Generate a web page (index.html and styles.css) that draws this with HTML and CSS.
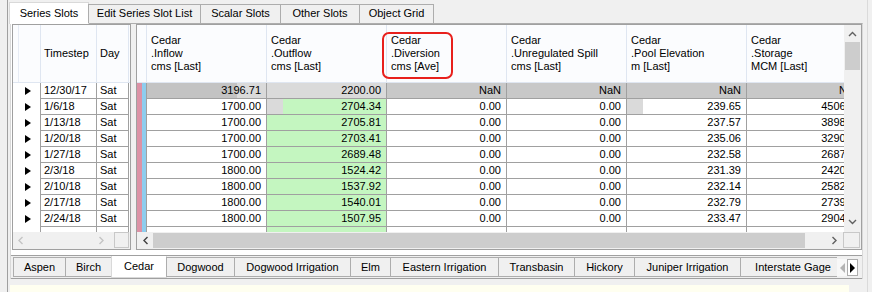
FILE: index.html
```html
<!DOCTYPE html>
<html lang="en">
<head>
    <meta charset="UTF-8">
    <title>Series Slots - Cedar</title>
    <link rel="stylesheet" href="styles.css">
</head>
<body>

<div class="app">
    <div class="toptabs">
        <div class="tab active" style="width:80px">Series Slots</div>
        <div class="tab" style="width:113px">Edit Series Slot List</div>
        <div class="tab" style="width:81px">Scalar Slots</div>
        <div class="tab" style="width:80px">Other Slots</div>
        <div class="tab" style="width:75px">Object Grid</div>
    </div>

    <div class="pane">
        <div class="grids">
            <!-- left: timestep grid -->
            <div class="lgrid">
                <div class="lview">
                    <div class="lhead">
                        <div class="lc rh"><span class="rhline"></span></div>
                        <div class="lc ts">Timestep</div>
                        <div class="lc day">Day</div>
                    </div>
                    <div class="lrow"><div class="lc rh"><i class="arrow"></i></div><div class="lc ts">12/30/17</div><div class="lc day">Sat</div></div>
                    <div class="lrow"><div class="lc rh"><i class="arrow"></i></div><div class="lc ts">1/6/18</div><div class="lc day">Sat</div></div>
                    <div class="lrow"><div class="lc rh"><i class="arrow"></i></div><div class="lc ts">1/13/18</div><div class="lc day">Sat</div></div>
                    <div class="lrow"><div class="lc rh"><i class="arrow"></i></div><div class="lc ts">1/20/18</div><div class="lc day">Sat</div></div>
                    <div class="lrow"><div class="lc rh"><i class="arrow"></i></div><div class="lc ts">1/27/18</div><div class="lc day">Sat</div></div>
                    <div class="lrow"><div class="lc rh"><i class="arrow"></i></div><div class="lc ts">2/3/18</div><div class="lc day">Sat</div></div>
                    <div class="lrow"><div class="lc rh"><i class="arrow"></i></div><div class="lc ts">2/10/18</div><div class="lc day">Sat</div></div>
                    <div class="lrow"><div class="lc rh"><i class="arrow"></i></div><div class="lc ts">2/17/18</div><div class="lc day">Sat</div></div>
                    <div class="lrow"><div class="lc rh"><i class="arrow"></i></div><div class="lc ts">2/24/18</div><div class="lc day">Sat</div></div>
                    <div class="lrow"><div class="lc rh"></div><div class="lc ts"></div><div class="lc day"></div></div>
                </div>
                <div class="hbar">
                    <div class="htrack off">
                        <svg width="8" height="9" viewBox="0 0 8 9"><polyline points="5.5,1 2,4.5 5.5,8" fill="none" stroke="#c4c4c4" stroke-width="1.4"/></svg>
                        <svg width="8" height="9" viewBox="0 0 8 9"><polyline points="2.5,1 6,4.5 2.5,8" fill="none" stroke="#c4c4c4" stroke-width="1.4"/></svg>
                    </div>
                    <div class="corner"></div>
                </div>
            </div>

            <div class="splitter"></div>

            <!-- right: slot grid -->
            <div class="rgrid">
                <div class="rtop">
                    <div class="rview">
                        <div class="rhead">
                            <div class="stripes"></div>
                            <div class="hc">Cedar<br>.Inflow<br>cms [Last]</div>
                            <div class="hc">Cedar<br>.Outflow<br>cms [Last]</div>
                            <div class="hc marked">Cedar<br>.Diversion<br>cms [Ave]<span class="ring"></span></div>
                            <div class="hc">Cedar<br>.Unregulated Spill<br>cms [Last]</div>
                            <div class="hc">Cedar<br>.Pool Elevation<br>m [Last]</div>
                            <div class="hc">Cedar<br>.Storage<br>MCM [Last]</div>
                        </div>
                        <div class="rrow">
                            <div class="stripes"><b class="pink"></b><b class="blue"></b></div>
                            <div class="c init bar" style="background-size:90px 100%">3196.71</div>
                            <div class="c init">2200.00</div>
                            <div class="c nan">NaN</div>
                            <div class="c nan">NaN</div>
                            <div class="c nan">NaN</div>
                            <div class="c nan">NaN</div>
                        </div>
                        <div class="rrow">
                            <div class="stripes"><b class="pink"></b><b class="blue"></b></div>
                            <div class="c">1700.00</div>
                            <div class="c out bar" style="background-size:16px 100%">2704.34</div>
                            <div class="c">0.00</div>
                            <div class="c">0.00</div>
                            <div class="c bar" style="background-size:16px 100%">239.65</div>
                            <div class="c">4506.38</div>
                        </div>
                        <div class="rrow">
                            <div class="stripes"><b class="pink"></b><b class="blue"></b></div>
                            <div class="c">1700.00</div>
                            <div class="c out">2705.81</div>
                            <div class="c">0.00</div>
                            <div class="c">0.00</div>
                            <div class="c">237.57</div>
                            <div class="c">3898.52</div>
                        </div>
                        <div class="rrow">
                            <div class="stripes"><b class="pink"></b><b class="blue"></b></div>
                            <div class="c">1700.00</div>
                            <div class="c out">2703.41</div>
                            <div class="c">0.00</div>
                            <div class="c">0.00</div>
                            <div class="c">235.06</div>
                            <div class="c">3290.17</div>
                        </div>
                        <div class="rrow">
                            <div class="stripes"><b class="pink"></b><b class="blue"></b></div>
                            <div class="c">1700.00</div>
                            <div class="c out">2689.48</div>
                            <div class="c">0.00</div>
                            <div class="c">0.00</div>
                            <div class="c">232.58</div>
                            <div class="c">2687.74</div>
                        </div>
                        <div class="rrow">
                            <div class="stripes"><b class="pink"></b><b class="blue"></b></div>
                            <div class="c">1800.00</div>
                            <div class="c out">1524.42</div>
                            <div class="c">0.00</div>
                            <div class="c">0.00</div>
                            <div class="c">231.39</div>
                            <div class="c">2420.06</div>
                        </div>
                        <div class="rrow">
                            <div class="stripes"><b class="pink"></b><b class="blue"></b></div>
                            <div class="c">1800.00</div>
                            <div class="c out">1537.92</div>
                            <div class="c">0.00</div>
                            <div class="c">0.00</div>
                            <div class="c">232.14</div>
                            <div class="c">2582.31</div>
                        </div>
                        <div class="rrow">
                            <div class="stripes"><b class="pink"></b><b class="blue"></b></div>
                            <div class="c">1800.00</div>
                            <div class="c out">1540.01</div>
                            <div class="c">0.00</div>
                            <div class="c">0.00</div>
                            <div class="c">232.79</div>
                            <div class="c">2739.85</div>
                        </div>
                        <div class="rrow">
                            <div class="stripes"><b class="pink"></b><b class="blue"></b></div>
                            <div class="c">1800.00</div>
                            <div class="c out">1507.95</div>
                            <div class="c">0.00</div>
                            <div class="c">0.00</div>
                            <div class="c">233.47</div>
                            <div class="c">2904.40</div>
                        </div>
                        <div class="rrow">
                            <div class="stripes"><b class="pink"></b><b class="blue"></b></div>
                            <div class="c"></div>
                            <div class="c out"></div>
                            <div class="c"></div>
                            <div class="c"></div>
                            <div class="c"></div>
                            <div class="c"></div>
                        </div>
                    </div>
                    <div class="vbar">
                        <svg width="9" height="6" viewBox="0 0 9 6"><polyline points="1,5 4.5,1.5 8,5" fill="none" stroke="#606060" stroke-width="1.4"/></svg>
                        <div class="vthumb"></div>
                        <div class="fill"></div>
                        <svg width="9" height="6" viewBox="0 0 9 6"><polyline points="1,1 4.5,4.5 8,1" fill="none" stroke="#606060" stroke-width="1.4"/></svg>
                    </div>
                </div>
                <div class="hbar">
                    <div class="htrack">
                        <svg width="8" height="9" viewBox="0 0 8 9"><polyline points="5.5,1 2,4.5 5.5,8" fill="none" stroke="#404040" stroke-width="1.4"/></svg>
                        <div class="hthumb"></div>
                        <svg width="8" height="9" viewBox="0 0 8 9"><polyline points="2.5,1 6,4.5 2.5,8" fill="none" stroke="#606060" stroke-width="1.4"/></svg>
                    </div>
                    <div class="corner"></div>
                </div>
            </div>
        </div>

        <div class="objtabs">
            <div class="otabs">
                <div class="otab" style="width:53px">Aspen</div>
                <div class="otab" style="width:47px">Birch</div>
                <div class="otab active" style="width:56px">Cedar</div>
                <div class="otab" style="width:69px">Dogwood</div>
                <div class="otab" style="width:117px">Dogwood Irrigation</div>
                <div class="otab" style="width:41px">Elm</div>
                <div class="otab" style="width:109px">Eastern Irrigation</div>
                <div class="otab" style="width:77px">Transbasin</div>
                <div class="otab" style="width:61px">Hickory</div>
                <div class="otab" style="width:107px">Juniper Irrigation</div>
                <div class="otab" style="width:106px">Interstate Gage</div>
            </div>
            <div class="tabscroll">
                <div class="tsb off"><i class="tri left"></i></div>
                <div class="tsb on"><i class="tri right"></i></div>
            </div>
        </div>
    </div>

    <div class="status"></div>
</div>

</body>
</html>
```

FILE: styles.css
```css
* {
    box-sizing: border-box;
}
body {
    margin: 0;
    background-color: #f0f0f0;
    font-family: "Liberation Sans", Arial, sans-serif;
    font-size: 11px;
    color: #000;
    overflow: hidden;
}
.app {
    margin-left: 7px;
    width: 861px;
    height: 292px;
    border-left: 1px solid #a0a0a0;
    border-right: 1px solid #dadada;
    padding-top: 2px;
}

/* top tabs */
.toptabs {
    display: flex;
    align-items: flex-end;
    height: 21px;
    margin-left: 1px;
    position: relative;
    z-index: 1;
}
.tab {
    height: 19px;
    line-height: 17px;
    text-align: center;
    border: 1px solid #adadad;
    border-bottom: none;
    margin-left: -1px;
    background-color: #f0f0f0;
}
.tab.active {
    height: 22px;
    line-height: 20px;
    margin-left: 0;
    margin-bottom: -1px;
    background-color: #fff;
    border-color: #d9d9d9;
}
.pane {
    margin-left: 2px;
    width: 853px;
    height: 256px;
    border: 1px solid #d9d9d9;
    border-top-color: #adadad;
    background-color: #fff;
    padding-left: 1px;
}
.grids {
    display: flex;
    height: 226px;
}

/* left grid */
.lgrid {
    width: 119px;
    border: 1px solid #a0a0a0;
    display: flex;
    flex-direction: column;
}
.lview {
    height: 207px;
    overflow: hidden;
}
.lhead, .lrow {
    display: flex;
}
.lhead {
    height: 58px;
    background-color: #fbfcfe;
    border-bottom: 1px solid #dfe6f1;
}
.lhead .lc {
    display: flex;
    align-items: center;
    border-right: 1px solid #dfe6f1;
}
.lrow {
    height: 16px;
}
.lc {
    flex-shrink: 0;
    padding-left: 3px;
    line-height: 15px;
}
.lc.rh {
    width: 28px;
    padding-left: 0;
}
.lrow .lc.rh {
    border-right: 1px solid #a0a0a0;
}
.rhline {
    display: block;
    width: 6px;
    height: 100%;
    border-right: 1px solid #e6ebf4;
}
.lc.ts {
    width: 56px;
}
.lc.day {
    width: 32px;
}
.lrow .ts, .lrow .day {
    border-right: 1px solid #a0a0a0;
    border-bottom: 1px solid #a0a0a0;
}
.arrow {
    display: block;
    width: 0;
    height: 0;
    margin: 4px 0 0 12px;
    border-left: 6px solid #000;
    border-top: 4px solid transparent;
    border-bottom: 4px solid transparent;
}

.splitter {
    width: 5px;
    background-color: #f0f0f0;
}

/* right grid */
.rgrid {
    width: 726px;
    border: 1px solid #a0a0a0;
    display: flex;
    flex-direction: column;
}
.rtop {
    display: flex;
    height: 207px;
}
.rview {
    width: 707px;
    overflow: hidden;
}
.rhead, .rrow {
    display: flex;
}
.rhead {
    height: 58px;
    background-color: #fbfcfe;
    border-bottom: 1px solid #dfe6f1;
}
.stripes {
    width: 10px;
    flex-shrink: 0;
    display: flex;
    border-right: 1px solid #a0a0a0;
}
.rhead .stripes {
    border-right-color: #dfe6f1;
}
.pink {
    width: 5px;
    background-color: #dc92a6;
}
.blue {
    width: 4px;
    background-color: #8ecdee;
}
.hc {
    width: 120px;
    flex-shrink: 0;
    display: flex;
    flex-direction: column;
    justify-content: center;
    padding-left: 4px;
    line-height: 13px;
    border-right: 1px solid #dfe6f1;
    white-space: nowrap;
}
.hc.marked {
    position: relative;
}
.ring {
    position: absolute;
    left: -5px;
    top: 7px;
    width: 71px;
    height: 47px;
    border: 2px solid #e8201c;
    border-radius: 7px;
}
.rrow {
    height: 16px;
}
.c {
    width: 120px;
    flex-shrink: 0;
    text-align: right;
    padding-right: 5px;
    line-height: 15px;
    border-right: 1px solid #a0a0a0;
    border-bottom: 1px solid #a0a0a0;
    white-space: nowrap;
}
.c.init {
    background-color: #dadada;
}
.c.nan {
    background-color: #c8c8c8;
}
.c.out {
    background-color: #c4f6c0;
}
.c.bar {
    background-image: linear-gradient(#dadada, #dadada);
    background-repeat: no-repeat;
}
.c.init.bar {
    background-image: linear-gradient(#c3c3c3, #c3c3c3);
}

/* scroll bars */
.vbar {
    width: 17px;
    background-color: #f0f0f0;
    display: flex;
    flex-direction: column;
    align-items: center;
    padding: 6px 0 7px;
}
.vthumb {
    width: 15px;
    height: 28px;
    margin-top: 5px;
    background-color: #cdcdcd;
}
.fill {
    flex: 1;
}
.hbar {
    display: flex;
    height: 17px;
    background-color: #f0f0f0;
}
.htrack {
    flex: 1;
    display: flex;
    align-items: center;
    justify-content: space-between;
    padding: 0 5px 0 5px;
}
.lgrid .htrack {
    padding: 0 9px 0 4px;
}
.hthumb {
    height: 15px;
    width: 652px;
    margin-right: auto;
    margin-left: 3px;
    background-color: #cdcdcd;
}
.corner {
    width: 17px;
    border: 1px solid #c8c8c8;
    margin: 0 1px 1px 0;
    background-color: #f0f0f0;
}
.lgrid .corner {
    width: 15px;
    margin-right: 1px;
}

/* object tabs */
.objtabs {
    display: flex;
    margin-top: 5px;
    margin-left: -1px;
    height: 24px;
    background-color: #f0f0f0;
    border-top: 1px solid #a0a0a0;
    border-bottom: 1px solid #a0a0a0;
    padding-left: 2px;
}
.otabs {
    display: flex;
    width: 824px;
    overflow: hidden;
    align-items: flex-start;
}
.otab {
    flex-shrink: 0;
    height: 20px;
    margin-top: 1px;
    margin-left: -1px;
    line-height: 18px;
    text-align: center;
    border: 1px solid #adadad;
    background-color: #f0f0f0;
    white-space: nowrap;
}
.otab:first-child {
    margin-left: 0;
}
.otab.active {
    height: 23px;
    margin-top: -1px;
    line-height: 23px;
    background-color: #fff;
    border-color: #d9d9d9;
    border-top: none;
}
.tabscroll {
    display: flex;
    margin-top: 3px;
}
.tsb {
    width: 10px;
    height: 17px;
    display: flex;
    align-items: center;
    justify-content: center;
}
.tsb.off {
    background-color: #f8f8f8;
}
.tsb.on {
    width: 11px;
    border: 1px solid #adadad;
    background-color: #fff;
}
.tri {
    width: 0;
    height: 0;
    border-top: 5px solid transparent;
    border-bottom: 5px solid transparent;
}
.tri.left {
    border-right: 5px solid #b4b4b4;
}
.tri.right {
    border-left: 5px solid #000;
}

.status {
    margin: 6px 0 0 2px;
    width: 839px;
    height: 10px;
    background-color: #fffff0;
}
```
